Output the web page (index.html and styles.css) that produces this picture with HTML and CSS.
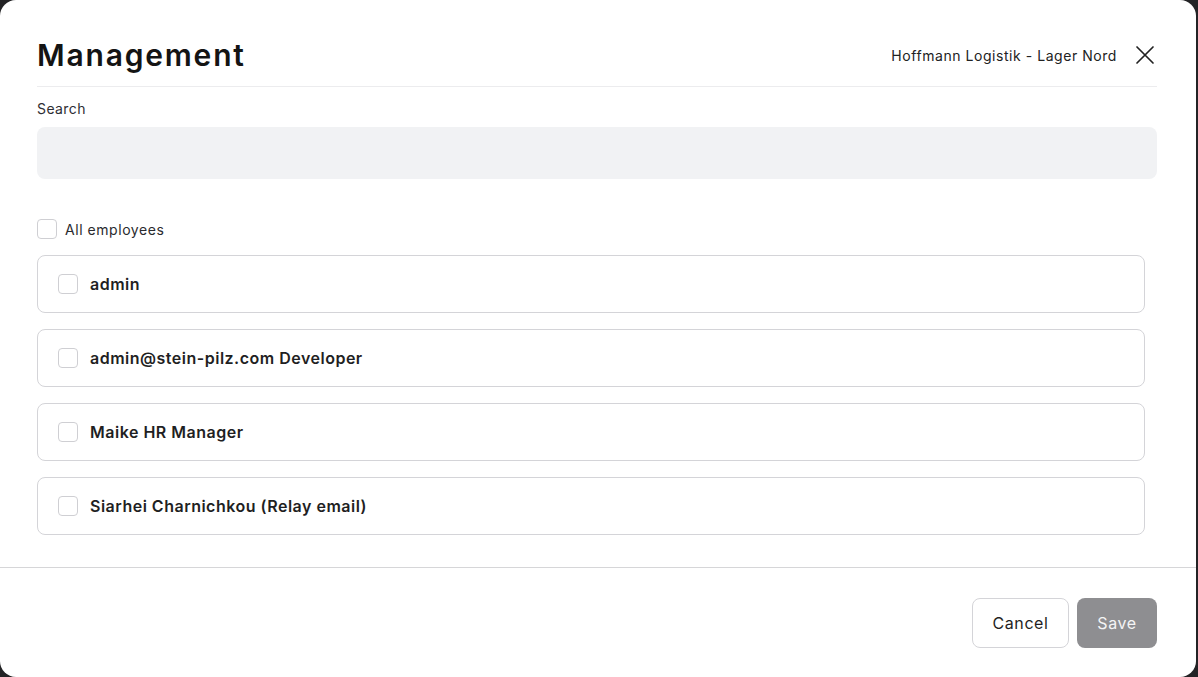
FILE: index.html
```html
<!DOCTYPE html>
<html lang="en">
<head>
    <meta charset="UTF-8">
    <meta name="viewport" content="width=device-width, initial-scale=1.0">
    <title>Management</title>
    <link rel="stylesheet" href="styles.css">
</head>
<body>
    <div class="modal">
        <div class="modal-body">
            <div class="modal-header">
                <h1>Management</h1>
                <div class="header-right">
                    <span class="location">Hoffmann Logistik - Lager Nord</span>
                    <button class="close-btn" aria-label="Close">
                        <svg width="20" height="20" viewBox="0 0 20 20" fill="none" stroke="#222" stroke-width="1.7" stroke-linecap="round">
                            <path d="M2 2 L18 18 M18 2 L2 18"/>
                        </svg>
                    </button>
                </div>
            </div>

            <label class="search-label" for="search">Search</label>
            <input id="search" class="search-input" type="text">

            <label class="all-row">
                <span class="checkbox"></span>
                All employees
            </label>

            <div class="list">
                <label class="item"><span class="checkbox"></span>admin</label>
                <label class="item"><span class="checkbox"></span>admin@stein-pilz.com Developer</label>
                <label class="item"><span class="checkbox"></span>Maike HR Manager</label>
                <label class="item"><span class="checkbox"></span>Siarhei Charnichkou (Relay email)</label>
            </div>
        </div>

        <div class="modal-footer">
            <button class="btn-cancel">Cancel</button>
            <button class="btn-save">Save</button>
        </div>
    </div>
</body>
</html>
```

FILE: styles.css
```css
body {
    margin: 0;
    background: #232325;
    font-family: Inter, "Noto Sans", sans-serif;
    color: #1f1f23;
}
.modal {
    width: 1196px;
    height: 677px;
    background: #fff;
    border-radius: 16px;
    overflow: hidden;
}
.modal-body {
    padding: 0 39px 32px 37px;
}
.modal-header {
    display: flex;
    align-items: center;
    justify-content: space-between;
    padding: 37px 0 13px;
    border-bottom: 1px solid #ececee;
}
.modal-header h1 {
    margin: 0;
    font-size: 30px;
    line-height: 36px;
    font-weight: 600;
    letter-spacing: 1.8px;
    color: #141414;
}
.header-right {
    display: flex;
    align-items: center;
    gap: 18px;
    padding-right: 2px;
}
.location {
    font-size: 14px;
    letter-spacing: 0.55px;
    color: #222;
}
.close-btn {
    display: flex;
    padding: 0;
    border: none;
    background: none;
    cursor: pointer;
}
.search-label {
    display: block;
    margin-top: 12px;
    font-size: 14px;
    line-height: 20px;
    letter-spacing: 0.4px;
    color: #2e2e33;
}
.search-input {
    display: block;
    box-sizing: border-box;
    width: 100%;
    height: 52px;
    margin-top: 8px;
    border: none;
    border-radius: 8px;
    background: #f1f2f4;
    outline: none;
}
.checkbox {
    box-sizing: border-box;
    width: 20px;
    height: 20px;
    border: 1px solid #cfcfd3;
    border-radius: 4px;
    background: #fff;
    flex-shrink: 0;
}
.all-row {
    display: flex;
    align-items: center;
    gap: 8px;
    margin-top: 40px;
    font-size: 14px;
    letter-spacing: 0.55px;
    color: #2a2a2e;
}
.list {
    display: flex;
    flex-direction: column;
    gap: 16px;
    margin-top: 16px;
    padding-right: 12px;
}
.item {
    display: flex;
    align-items: center;
    gap: 12px;
    box-sizing: border-box;
    height: 58px;
    padding: 0 20px;
    border: 1px solid #d4d4d8;
    border-radius: 8px;
    font-size: 16px;
    font-weight: 600;
    letter-spacing: 0.5px;
    color: #1f1f23;
}
.modal-footer {
    display: flex;
    justify-content: flex-end;
    gap: 8px;
    padding: 30px 39px 0 0;
    border-top: 1px solid #d6d6d8;
}
.modal-footer button {
    height: 50px;
    border-radius: 8px;
    font-family: inherit;
    font-size: 16px;
    letter-spacing: 0.6px;
    cursor: pointer;
}
.btn-cancel {
    width: 97px;
    border: 1px solid #d4d4d8;
    background: #fff;
    color: #1f1f23;
}
.btn-save {
    width: 80px;
    border: none;
    background: #8e8e91;
    color: #f4f4f5;
}
```
